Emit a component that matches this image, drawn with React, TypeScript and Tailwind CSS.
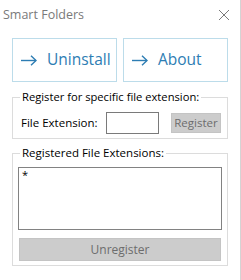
const font = { fontFamily: '"Open Sans", "Noto Sans", sans-serif' };

function BigButton({ label }: { label: string }) {
    return (
        <button className="w-[105px] h-[44px] border border-[#bcdcea] bg-white flex items-center pl-[8px] text-[15.5px] text-[#2d7db3] gap-[10px]">
            <svg width="16" height="11" viewBox="0 0 16 11" fill="none" stroke="currentColor" strokeWidth="1.4">
                <path d="M0 5.5H15" />
                <path d="M10 0.8L15 5.5L10 10.2" />
            </svg>
            <span className="leading-none">{label}</span>
        </button>
    );
}

export default function App() {
    return (
        <div style={font} className="w-[241px] h-[280px] bg-white border-r border-[#d4d4d4] flex flex-col">
            {/* Title bar */}
            <div className="h-[30px] flex items-center justify-between pl-[3px] pr-[11px]">
                <span className="text-[12.5px] text-[#7a7a7a]">Smart Folders</span>
                <svg width="10" height="10" viewBox="0 0 10 10" stroke="#7a7a7a" strokeWidth="1">
                    <path d="M0 0L10 10M10 0L0 10" />
                </svg>
            </div>

            {/* Action buttons */}
            <div className="flex gap-[6px] ml-[12px] mt-[8px]">
                <BigButton label="Uninstall" />
                <BigButton label="About" />
            </div>

            {/* Register group */}
            <fieldset className="ml-[12px] w-[216px] mt-[7px] border border-[#dcdcdc] h-[50px]">
                <legend className="ml-[7px] px-[2px] text-[11.2px] leading-[16px] text-black">
                    Register for specific file extension:
                </legend>
                <div className="flex items-center mt-[7px] pl-[8px]">
                    <span className="text-[11.5px] text-black w-[85px]">File Extension:</span>
                    <input className="w-[53px] h-[22px] border border-[#7a7a7a] bg-white outline-none" />
                    <button className="ml-[12px] w-[50px] h-[20px] bg-[#cccccc] border border-[#c4c4c4] text-[11.5px] text-[#6d6d6d] leading-none">
                        Register
                    </button>
                </div>
            </fieldset>

            {/* Registered group */}
            <fieldset className="ml-[12px] w-[216px] mt-[6px] border border-[#dcdcdc] h-[121px]">
                <legend className="ml-[7px] px-[2px] text-[11.5px] leading-[16px] text-black">
                    Registered File Extensions:
                </legend>
                <div className="mt-[6px] ml-[5px] w-[204px] h-[63px] border border-[#828282] px-[3px] text-[11px] text-black leading-[14px]">
                    *
                </div>
                <button className="mt-[8px] ml-[6px] w-[202px] h-[23px] bg-[#cccccc] border border-[#c4c4c4] text-[12px] text-[#6d6d6d] leading-none">
                    Unregister
                </button>
            </fieldset>
        </div>
    );
}
